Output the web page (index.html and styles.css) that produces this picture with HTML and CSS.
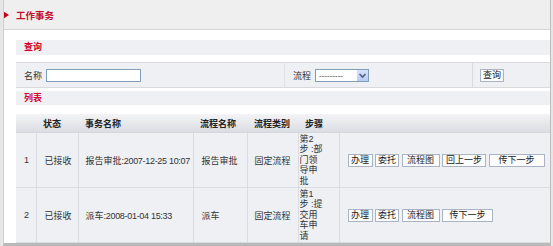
FILE: index.html
```html
<!DOCTYPE html>
<html>
<head>
<meta charset="utf-8">
<link rel="stylesheet" href="styles.css">
</head>
<body>
<div class="frame">
  <div class="topbar"><span class="tri"></span><span class="title">工作事务</span></div>
  <div class="main">
    <div class="sec">查询</div>
    <table class="search">
      <tr>
        <td class="s1"><span class="lbl">名称</span><input class="txt" type="text"></td>
        <td class="s2"><span class="lbl">流程</span><span class="sel"><span class="seltext">---------</span><span class="arrow"><svg width="9" height="7" viewBox="0 0 9 7"><path d="M1.5 2 L4.5 5 L7.5 2" fill="none" stroke="#4d6185" stroke-width="1.6"/></svg></span></span></td>
        <td class="s3"><button class="btn">查询</button></td>
      </tr>
    </table>
    <div class="sec sec2">列表</div>
    <table class="list">
      <colgroup>
        <col class="w-no"><col class="w-st"><col class="w-name"><col class="w-flow"><col class="w-type"><col class="w-step"><col class="w-op">
      </colgroup>
      <thead>
        <tr><th></th><th>状态</th><th>事务名称</th><th>流程名称</th><th>流程类别</th><th class="th-step">步骤</th><th></th></tr>
      </thead>
      <tbody>
        <tr>
          <td class="no">1</td>
          <td class="st">已接收</td>
          <td>报告审批<span class="dt">:2007-12-25 10:07</span></td>
          <td class="flow">报告审批</td>
          <td>固定流程</td>
          <td class="step"><div class="stepbox">第2 步 :部门领导申批</div></td>
          <td class="ops"><button class="btn b25">办理</button> <button class="btn b24">委托</button> <button class="btn b38">流程图</button> <button class="btn b44">回上一步</button> <button class="btn b56">传下一步</button></td>
        </tr>
        <tr>
          <td class="no">2</td>
          <td class="st">已接收</td>
          <td>派车<span class="dt">:2008-01-04 15:33</span></td>
          <td class="flow">派车</td>
          <td>固定流程</td>
          <td class="step"><div class="stepbox">第1 步 :提交用车申请</div></td>
          <td class="ops"><button class="btn b25">办理</button> <button class="btn b24">委托</button> <button class="btn b38">流程图</button> <button class="btn b51">传下一步</button></td>
        </tr>
      </tbody>
    </table>
  </div>
</div>
</body>
</html>
```
FILE: styles.css
```css
html, body {
  margin: 0;
  padding: 0;
}
body {
  width: 553px;
  height: 246px;
  overflow: hidden;
  background: #e6e6e6;
  font-family: "Liberation Sans", "Noto Sans CJK SC", sans-serif;
  font-size: 9px;
  color: #333;
}
.frame {
  margin-left: 3px;
  width: 546px;
  height: 243px;
  overflow: hidden;
  background: #fff;
  border-left: 1px solid #cfcfcf;
  border-right: 1px solid #bdbdbd;
  border-bottom: 3px solid #b9b9b9;
}
.topbar {
  height: 29px;
  border-bottom: 1px solid #d6d6d6;
  background: #efefef;
  display: flex;
  align-items: center;
}
.tri {
  width: 0;
  height: 0;
  border-left: 6px solid #c8001e;
  border-top: 4px solid transparent;
  border-bottom: 4px solid transparent;
  margin-left: -1px;
}
.title {
  margin-left: 7px;
  color: #c4102c;
  font-weight: bold;
  font-size: 9.5px;
}
.main {
  padding: 10px 0 0 12px;
}
.sec {
  height: 15px;
  line-height: 15px;
  background: #eef0f4;
  color: #d0002a;
  font-weight: bold;
  padding-left: 8px;
}
.sec2 {
  margin-top: 3px;
  height: 14px;
  line-height: 14px;
}
.search {
  margin-top: 7px;
  width: 100%;
  border-collapse: collapse;
  background: #eef0f4;
  border-top: 1px solid #d8dade;
  border-bottom: 1px solid #d8dade;
}
.search td {
  height: 24px;
  padding: 0 0 0 8px;
  vertical-align: middle;
}
.search .s1 { width: 260px; }
.search .s2 { width: 179px; border-left: 1px solid #dfe1e5; }
.search .s3 { border-left: 1px solid #d8dade; padding-left: 7px; }
.lbl {
  display: inline-block;
  vertical-align: middle;
  margin-right: 4px;
}
.txt {
  box-sizing: border-box;
  width: 95px;
  height: 13px;
  border: 1px solid #7f9db9;
  padding: 0;
  margin: 0;
  vertical-align: middle;
  background: #fff;
}
.sel {
  position: relative;
  display: inline-block;
  box-sizing: border-box;
  width: 54px;
  height: 13px;
  border: 1px solid #7f9db9;
  background: #fff;
  vertical-align: middle;
}
.seltext {
  display: block;
  line-height: 11px;
  padding-left: 3px;
  font-size: 8px;
  color: #333;
}
.arrow {
  position: absolute;
  right: 0;
  top: 0;
  width: 11px;
  height: 11px;
  background: linear-gradient(#d6e2fc, #b8cbf5);
  display: flex;
  align-items: center;
  justify-content: center;
}
.btn {
  box-sizing: border-box;
  height: 13px;
  padding: 0;
  margin: 0;
  border: 1px solid #a9b4c6;
  background: #fcfcfd;
  font-family: "Liberation Sans", "Noto Sans CJK SC", sans-serif;
  font-size: 9px;
  line-height: 11px;
  color: #222;
  white-space: nowrap;
  vertical-align: middle;
}
.search .btn { width: 24px; }
.b25 { width: 25px; }
.b24 { width: 24px; }
.b38 { width: 38px; }
.b44 { width: 44px; }
.b56 { width: 56px; }
.b51 { width: 51px; }
.list {
  margin-top: 9px;
  width: 100%;
  border-collapse: collapse;
  table-layout: fixed;
  background: #eef0f4;
}
.w-no { width: 20px; }
.w-st { width: 42px; }
.w-name { width: 115px; }
.w-flow { width: 54px; }
.w-type { width: 51px; }
.w-step { width: 41px; }
.list th {
  height: 18px;
  padding: 0 0 0 7px;
  text-align: left;
  font-weight: bold;
  color: #222;
  background: linear-gradient(#f4f4f6, #dadde3);
  border-bottom: 1px solid #d4d7dd;
}
.list td {
  height: 54px;
  padding: 0 0 0 7px;
  vertical-align: middle;
  border-right: 1px solid #d9dce1;
  border-bottom: 1px solid #d9dce1;
  color: #333;
  white-space: nowrap;
}
.list td.no { padding-left: 8px; }
.list td.st { padding-left: 8px; }
.list td.flow { padding-left: 8px; }
.list td.step { padding: 0 0 0 1px; white-space: normal; }
.list td.ops { padding-left: 8px; border-right: none; }
.stepbox {
  width: 25px;
  line-height: 10.5px;
  color: #333;
}
.dt {
  letter-spacing: -0.3px;
}
```
